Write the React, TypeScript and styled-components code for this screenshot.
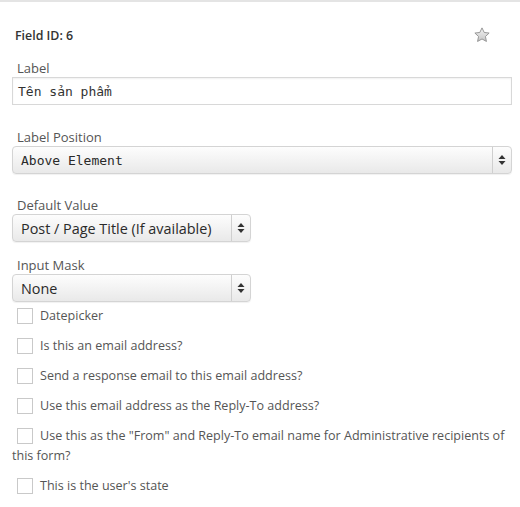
import React from "react";
import styled, { createGlobalStyle } from "styled-components";

const Global = createGlobalStyle`
  html, body { margin: 0; padding: 0; background: #fff; }
  body { font-family: "Open Sans", "Liberation Sans", sans-serif; }
`;

const Panel = styled.div`
  width: 520px;
  box-sizing: border-box;
  border-top: 2px solid #e4e4e4;
  padding: 0 8px 0 12px;
`;

const Header = styled.div`
  display: flex;
  align-items: center;
  justify-content: space-between;
  margin-top: 23px;
  padding: 0 21px 0 3px;
  height: 20px;
`;

const FieldId = styled.span`
  font-size: 12.4px;
  font-weight: 600;
  color: #333;
`;

const Label = styled.div<{ $top: number }>`
  margin-top: ${(p) => p.$top}px;
  padding-left: 5px;
  font-size: 13px;
  line-height: 18px;
  color: #555;
`;

const TextInput = styled.div`
  box-sizing: border-box;
  width: 500px;
  height: 28px;
  border: 1px solid #d8d8d8;
  box-shadow: inset 0 1px 2px rgba(0, 0, 0, 0.06);
  padding-left: 5px;
  display: flex;
  align-items: center;
  font-family: "DejaVu Sans Mono", "Liberation Mono", monospace;
  font-size: 13px;
  color: #333;
`;

const Select = styled.div<{ $width: number; $mono?: boolean }>`
  box-sizing: border-box;
  width: ${(p) => p.$width}px;
  height: 28px;
  display: flex;
  align-items: stretch;
  border: 1px solid #d4d4d4;
  border-radius: 4px;
  background: linear-gradient(#fdfdfd, #e9e9e9);
  box-shadow: 0 1px 1px rgba(0, 0, 0, 0.06);
  color: #2a2a2a;
  font-family: ${(p) =>
    p.$mono
      ? `"DejaVu Sans Mono", "Liberation Mono", monospace`
      : `"Open Sans", "Liberation Sans", sans-serif`};
  font-size: ${(p) => (p.$mono ? 13 : 14.4)}px;
`;

const SelectValue = styled.span`
  flex: 1;
  display: flex;
  align-items: center;
  padding-left: 8px;
  white-space: nowrap;
`;

const Arrows = styled.span`
  width: 18px;
  border-left: 1px solid #cfcfcf;
  display: flex;
  align-items: center;
  justify-content: center;
`;

const Checks = styled.div`
  margin-top: 4px;
`;

const CheckRow = styled.div`
  font-size: 12.55px;
  line-height: 20px;
  color: #555;
  margin-bottom: 10px;
`;

const Box = styled.span`
  display: inline-block;
  box-sizing: border-box;
  width: 16px;
  height: 16px;
  border: 1px solid #c9c9c9;
  background: #fff;
  vertical-align: top;
  margin: 2px 7px 0 5px;
`;

const Star = () => (
  <svg width="18" height="18" viewBox="0 0 24 24">
    <defs>
      <linearGradient id="sg" x1="0" y1="0" x2="0" y2="1">
        <stop offset="0" stopColor="#f4f4f4" />
        <stop offset="1" stopColor="#c4c4c4" />
      </linearGradient>
    </defs>
    <path
      d="M12 2.5l2.9 6.1 6.6.8-4.9 4.6 1.3 6.6L12 17.3l-5.9 3.3 1.3-6.6-4.9-4.6 6.6-.8z"
      fill="url(#sg)"
      stroke="#8f8f8f"
      strokeWidth="1.2"
      strokeLinejoin="round"
    />
  </svg>
);

const UpDown = () => (
  <svg width="8" height="12" viewBox="0 0 8 12">
    <path d="M4 1L7.5 5H0.5z" fill="#333" />
    <path d="M4 11L7.5 7H0.5z" fill="#333" />
  </svg>
);

const SelectField = ({ value, width, mono }: { value: string; width: number; mono?: boolean }) => (
  <Select $width={width} $mono={mono}>
    <SelectValue>{value}</SelectValue>
    <Arrows>
      <UpDown />
    </Arrows>
  </Select>
);

const checks = [
  "Datepicker",
  "Is this an email address?",
  "Send a response email to this email address?",
  "Use this email address as the Reply-To address?",
  'Use this as the "From" and Reply-To email name for Administrative recipients of this form?',
  "This is the user's state",
];

export default function App() {
  return (
    <>
      <Global />
      <Panel>
        <Header>
          <FieldId>Field ID: 6</FieldId>
          <Star />
        </Header>

        <Label $top={14}>Label</Label>
        <TextInput>Tên sản phẩm</TextInput>

        <Label $top={23}>Label Position</Label>
        <SelectField value="Above Element" width={500} mono />

        <Label $top={22}>Default Value</Label>
        <SelectField value="Post / Page Title (If available)" width={239} />

        <Label $top={14}>Input Mask</Label>
        <SelectField value="None" width={239} />

        <Checks>
          {checks.map((c) => (
            <CheckRow key={c}>
              <Box />
              {c}
            </CheckRow>
          ))}
        </Checks>
      </Panel>
    </>
  );
}
